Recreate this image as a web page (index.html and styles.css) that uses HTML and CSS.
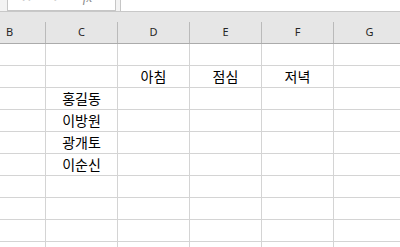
FILE: index.html
```html
<!DOCTYPE html>
<html lang="ko">

<head>
    <meta charset="UTF-8">
    <title>시트1</title>
    <link rel="stylesheet" href="styles.css">
</head>

<body>

    <div id="sheet">
        <!-- formula bar (scrolled up, only the bottom edge shows) -->
        <div class="formula_bar">
            <div class="fx_buttons">
                <span class="fx_icon">✕</span>
                <span class="fx_icon">✓</span>
                <span class="fx_icon fx_text">fx</span>
            </div>
            <div class="formula_input"></div>
        </div>

        <div class="header_gap"></div>

        <div class="col_headers">
            <div class="col_head">B</div>
            <div class="col_head">C</div>
            <div class="col_head">D</div>
            <div class="col_head">E</div>
            <div class="col_head">F</div>
            <div class="col_head">G</div>
        </div>

        <div class="grid">
            <!-- row 1 -->
            <div class="cell"></div><div class="cell"></div><div class="cell"></div>
            <div class="cell"></div><div class="cell"></div><div class="cell"></div>
            <!-- row 2 -->
            <div class="cell"></div><div class="cell"></div><div class="cell">아침</div>
            <div class="cell">점심</div><div class="cell">저녁</div><div class="cell"></div>
            <!-- row 3 -->
            <div class="cell"></div><div class="cell">홍길동</div><div class="cell"></div>
            <div class="cell"></div><div class="cell"></div><div class="cell"></div>
            <!-- row 4 -->
            <div class="cell"></div><div class="cell">이방원</div><div class="cell"></div>
            <div class="cell"></div><div class="cell"></div><div class="cell"></div>
            <!-- row 5 -->
            <div class="cell"></div><div class="cell">광개토</div><div class="cell"></div>
            <div class="cell"></div><div class="cell"></div><div class="cell"></div>
            <!-- row 6 -->
            <div class="cell"></div><div class="cell">이순신</div><div class="cell"></div>
            <div class="cell"></div><div class="cell"></div><div class="cell"></div>
            <!-- row 7 -->
            <div class="cell"></div><div class="cell"></div><div class="cell"></div>
            <div class="cell"></div><div class="cell"></div><div class="cell"></div>
            <!-- row 8 -->
            <div class="cell"></div><div class="cell"></div><div class="cell"></div>
            <div class="cell"></div><div class="cell"></div><div class="cell"></div>
            <!-- row 9 -->
            <div class="cell"></div><div class="cell"></div><div class="cell"></div>
            <div class="cell"></div><div class="cell"></div><div class="cell"></div>
            <!-- row 10 -->
            <div class="cell"></div><div class="cell"></div><div class="cell"></div>
            <div class="cell"></div><div class="cell"></div><div class="cell"></div>
        </div>
    </div>

</body>

</html>
```

FILE: styles.css
```css
*{
    box-sizing: border-box;
}

body{
    margin: 0;
    width: 400px;
    height: 247px;
    overflow: hidden;
    background-color: white;
    font-family: "Noto Sans CJK KR", "Noto Sans", sans-serif;
}

#sheet{
    width: 400px;
    overflow: hidden;
}

.formula_bar{
    display: flex;
    gap: 4px;
    height: 12px;
    padding-left: 7px;
    background-color: #f3f3f3;
    border-bottom: 1px solid #c8c8c8;
}

.fx_buttons{
    width: 109px;
    height: 11px;
    display: flex;
    overflow: hidden;
    background-color: white;
    border: 1px solid #c6c6c6;
    border-top: none;
}

.fx_icon{
    margin-top: -10px;
    font-family: "DejaVu Sans", sans-serif;
    font-size: 13px;
    line-height: 16px;
    color: #c4c4c4;
}

.fx_icon:nth-child(1){
    margin-left: 13px;
}

.fx_icon:nth-child(2){
    margin-left: 20px;
}

.fx_icon:nth-child(3){
    margin-left: 20px;
}

.fx_text{
    font-style: italic;
    font-family: "Liberation Serif", serif;
    color: #8a8a8a;
}

.formula_input{
    flex: 1;
    height: 11px;
    background-color: white;
    border-left: 1px solid #c6c6c6;
}

.header_gap{
    height: 10px;
    background-color: #e6e6e6;
}

.col_headers{
    display: grid;
    grid-template-columns: repeat(6, 72px);
    margin-left: -26px;
    background-color: #e6e6e6;
    border-bottom: 1px solid #ababab;
}

.col_head{
    height: 21px;
    border-right: 1px solid #bababa;
    font-family: "Noto Sans", sans-serif;
    font-size: 11px;
    line-height: 20px;
    text-align: center;
    color: #262626;
}

.grid{
    display: grid;
    grid-template-columns: repeat(6, 72px);
    margin-left: -26px;
}

.cell{
    height: 22px;
    border-right: 1px solid #d4d4d4;
    border-bottom: 1px solid #d4d4d4;
    font-size: 14px;
    line-height: 21px;
    text-align: center;
    color: black;
    white-space: nowrap;
}
```
